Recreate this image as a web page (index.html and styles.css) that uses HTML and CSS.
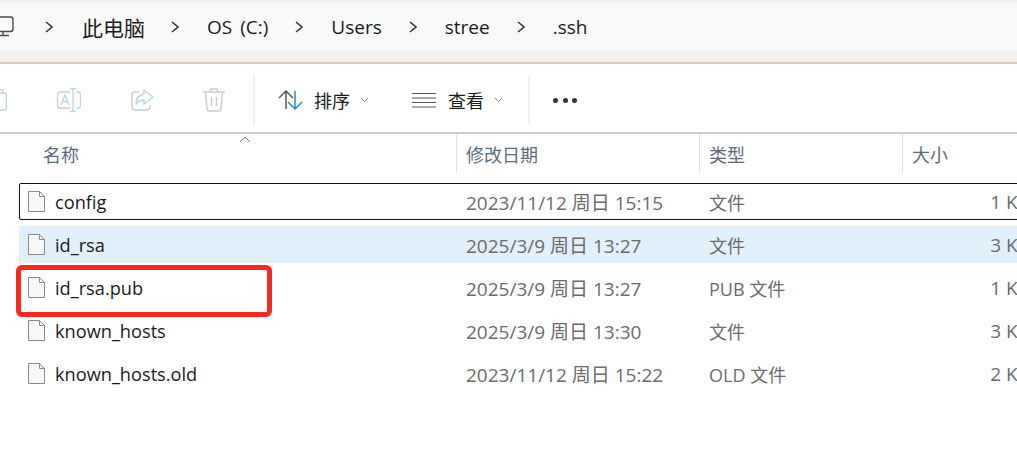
FILE: index.html
```html
<!DOCTYPE html>
<html lang="zh">
<head>
<meta charset="utf-8">
<title>.ssh</title>
<link rel="stylesheet" href="styles.css">
</head>
<body>
<div class="window">
  <nav class="crumbs">
    <svg class="pc" width="26" height="26" viewBox="0 0 26 26"><rect x="-6" y="3" width="19" height="14.500" rx="2.500" fill="none" stroke="#4a4a4a" stroke-width="1.400"/><path d="M-3 21.500H9M3 18v3" stroke="#4a4a4a" stroke-width="1.400" fill="none"/></svg>
    <svg class="chev" width="8" height="12" viewBox="0 0 8 12"><path d="M1 1l6 5-6 5" fill="none" stroke="#333" stroke-width="1.500"/></svg>
    <span class="crumb cjk">此电脑</span>
    <svg class="chev" width="8" height="12" viewBox="0 0 8 12"><path d="M1 1l6 5-6 5" fill="none" stroke="#333" stroke-width="1.500"/></svg>
    <span class="crumb spaced">OS (C:)</span>
    <svg class="chev" width="8" height="12" viewBox="0 0 8 12"><path d="M1 1l6 5-6 5" fill="none" stroke="#333" stroke-width="1.500"/></svg>
    <span class="crumb">Users</span>
    <svg class="chev" width="8" height="12" viewBox="0 0 8 12"><path d="M1 1l6 5-6 5" fill="none" stroke="#333" stroke-width="1.500"/></svg>
    <span class="crumb">stree</span>
    <svg class="chev" width="8" height="12" viewBox="0 0 8 12"><path d="M1 1l6 5-6 5" fill="none" stroke="#333" stroke-width="1.500"/></svg>
    <span class="crumb">.ssh</span>
  </nav>
  <div class="toolbar">
    <svg class="tool paste" width="24" height="26" viewBox="0 0 24 26"><rect x="11" y="6" width="12.500" height="17" rx="2.500" fill="none" stroke="#b5d4ec" stroke-width="1.400"/><path d="M14 7V3h6v4" fill="none" stroke="#cfcfcf" stroke-width="1.300"/></svg>
    <svg class="tool rename" width="24" height="24" viewBox="0 0 24 24"><path d="M13 4H3a2.500 2.500 0 0 0-2.500 2.500v11A2.500 2.500 0 0 0 3 20h10M19 4h2a2.500 2.500 0 0 1 2.500 2.500v11A2.500 2.500 0 0 1 21 20h-2" fill="none" stroke="#cdcdcd" stroke-width="1.400"/><path d="M13 .700h6M16 .700v22.600M13 23.300h6" fill="none" stroke="#b5d4ec" stroke-width="1.300"/><path d="M4 17l4-10 4 10M5.500 13.500h5" fill="none" stroke="#b5d4ec" stroke-width="1.300"/></svg>
    <svg class="tool share" width="24" height="24" viewBox="0 0 24 24"><path d="M9 4H5a3 3 0 0 0-3 3v12a3 3 0 0 0 3 3h12a3 3 0 0 0 3-3v-2" fill="none" stroke="#cdcdcd" stroke-width="1.400"/><path d="M14 2l9 7-9 7v-4c-4 0-6 1-8 4 0-6 3-9 8-10z" fill="none" stroke="#b5d4ec" stroke-width="1.400" stroke-linejoin="round"/></svg>
    <svg class="tool trash" width="24" height="26" viewBox="0 0 24 26"><path d="M1 5h22M8 5l1-3h6l1 3M3.500 5l1.500 17a2.500 2.500 0 0 0 2.500 2h9a2.500 2.500 0 0 0 2.500-2l1.500-17M9.500 10v9M14.500 10v9" fill="none" stroke="#cdcdcd" stroke-width="1.400"/></svg>
    <span class="sep"></span>
    <svg class="sort" width="25" height="22" viewBox="0 0 25 22"><path d="M8 20V2M1 9l7-7 7 7" fill="none" stroke="#555" stroke-width="1.500"/><path d="M17 2v18M10 13l7 7 7-7" fill="none" stroke="#2a86d0" stroke-width="1.500"/></svg>
    <span class="tlabel">排序</span>
    <svg class="down" width="9" height="6" viewBox="0 0 9 6"><path d="M1 1l3.500 3.500L8 1" fill="none" stroke="#888" stroke-width="1"/></svg>
    <svg class="lines" width="24" height="16" viewBox="0 0 24 16"><path d="M0 1.500h24M0 6h24M0 10.500h24M0 15h24" stroke="#555" stroke-width="1.200"/></svg>
    <span class="tlabel">查看</span>
    <svg class="down last" width="9" height="6" viewBox="0 0 9 6"><path d="M1 1l3.500 3.500L8 1" fill="none" stroke="#888" stroke-width="1"/></svg>
    <span class="sep"></span>
    <span class="dots"><i></i><i></i><i></i></span>
  </div>
  <div class="list">
    <svg class="sortmark" width="12" height="7" viewBox="0 0 12 7"><path d="M1 6l5-5 5 5" fill="none" stroke="#777" stroke-width="1"/></svg>
    <div class="head">
      <div class="hcell first">名称</div>
      <div class="hcell">修改日期</div>
      <div class="hcell">类型</div>
      <div class="hcell">大小</div>
    </div>
    <div class="row focus">
      <div class="name"><svg class="doc" width="17" height="21" viewBox="0 0 17 21"><path d="M.5.500h11l5 5v15H.500z" fill="#f8f8f8" stroke="#8a8a8a"/><path d="M11.500.500v5h5" fill="none" stroke="#8a8a8a"/></svg>config</div>
      <div class="date">2023/11/12 周日 15:15</div><div class="type">文件</div><div class="size">1 KB</div>
    </div>
    <div class="row selected">
      <div class="name"><svg class="doc" width="17" height="21" viewBox="0 0 17 21"><path d="M.5.500h11l5 5v15H.500z" fill="#f8f8f8" stroke="#8a8a8a"/><path d="M11.500.500v5h5" fill="none" stroke="#8a8a8a"/></svg>id_rsa</div>
      <div class="date">2025/3/9 周日 13:27</div><div class="type">文件</div><div class="size">3 KB</div>
    </div>
    <div class="row">
      <div class="name"><svg class="doc" width="17" height="21" viewBox="0 0 17 21"><path d="M.5.500h11l5 5v15H.500z" fill="#f8f8f8" stroke="#8a8a8a"/><path d="M11.500.500v5h5" fill="none" stroke="#8a8a8a"/></svg>id_rsa.pub</div>
      <div class="date">2025/3/9 周日 13:27</div><div class="type">PUB 文件</div><div class="size">1 KB</div>
      <div class="redbox"></div>
    </div>
    <div class="row">
      <div class="name"><svg class="doc" width="17" height="21" viewBox="0 0 17 21"><path d="M.5.500h11l5 5v15H.500z" fill="#f8f8f8" stroke="#8a8a8a"/><path d="M11.500.500v5h5" fill="none" stroke="#8a8a8a"/></svg>known_hosts</div>
      <div class="date">2025/3/9 周日 13:30</div><div class="type">文件</div><div class="size">3 KB</div>
    </div>
    <div class="row">
      <div class="name"><svg class="doc" width="17" height="21" viewBox="0 0 17 21"><path d="M.5.500h11l5 5v15H.500z" fill="#f8f8f8" stroke="#8a8a8a"/><path d="M11.500.500v5h5" fill="none" stroke="#8a8a8a"/></svg>known_hosts.old</div>
      <div class="date">2023/11/12 周日 15:22</div><div class="type">OLD 文件</div><div class="size">2 KB</div>
    </div>
  </div>
</div>
</body>
</html>
```
FILE: styles.css
```css
html, body {
  margin: 0;
  height: 100%;
  background: #fff;
  overflow: hidden;
}
body {
  font-family: "Open Sans", "Noto Sans CJK SC", sans-serif;
  color: #1b1b1b;
}
.window {
  width: 1017px;
  height: 463px;
  overflow: hidden;
}
.crumbs {
  display: flex;
  align-items: center;
  height: 48px;
  margin-top: 3px;
  background: #faf9f9;
  font-size: 19px;
  box-shadow: 0 -3px 0 #f3efec, 0 11px 0 #f3f0ee;
}
.pc {
  flex: none;
  margin-right: 19px;
}
.chev {
  flex: none;
  margin: 0 28px 0 27px;
}
.pc + .chev {
  margin: 0 29px 0 0;
}
.crumb {
  white-space: nowrap;
}
.crumb.cjk {
  font-size: 21px;
  margin-right: -1px;
}
.crumb.spaced {
  word-spacing: 3px;
}
.toolbar {
  display: flex;
  align-items: center;
  height: 70px;
  margin-top: 11px;
  padding-top: 4px;
  border-top: 2px solid #d3cdca;
  box-sizing: border-box;
}
.tool { flex: none; }
.paste { margin: 0 50px 0 -17px; }
.rename { margin-right: 49px; }
.share { margin-right: 48px; }
.trash { margin-right: 27px; }
.sep {
  flex: none;
  width: 2px;
  height: 48px;
  background: #f0f0f0;
  margin-right: 23px;
}
.sort { flex: none; margin-right: 11px; }
.tlabel {
  font-size: 18px;
  white-space: nowrap;
}
.down { flex: none; margin: 0 43px 0 10px; }
.down.last { margin-right: 25px; }
.lines { flex: none; margin-right: 12px; }
.dots {
  display: flex;
  gap: 4.500px;
}
.dots i {
  width: 5px;
  height: 5px;
  border-radius: 50%;
  background: #333;
}
.list {
  position: relative;
  border-top: 2px solid #d3cdca;
}
.sortmark {
  position: absolute;
  left: 239px;
  top: 2px;
}
.head {
  display: grid;
  grid-template-columns: 456px 243px 203px 200px;
  height: 39px;
  margin-bottom: 10px;
  color: #5c6b7a;
  font-size: 18px;
}
.hcell {
  display: flex;
  align-items: center;
  padding-left: 9px;
  border-left: 1px solid #e2e2e2;
  white-space: nowrap;
}
.hcell.first {
  border-left: 0;
  padding-left: 43px;
}
.row {
  position: relative;
  display: grid;
  grid-template-columns: 437px 243px 120px 211px;
  align-items: center;
  width: 1011px;
  height: 37px;
  margin: 0 0 6px 19px;
  color: #6b6b6b;
  font-size: 18px;
}
.row.focus {
  outline: 1px solid #111;
  outline-offset: -1px;
  border-radius: 2px;
}
.row.selected { background: #e2f0fb; }
.name {
  display: flex;
  align-items: center;
  gap: 10px;
  padding-left: 9px;
  color: #1b1b1b;
  font-size: 18.200px;
  white-space: nowrap;
}
.date {
  padding-left: 10px;
  font-size: 19px;
  white-space: nowrap;
}
.type {
  padding-left: 10px;
  white-space: nowrap;
}
.size {
  text-align: right;
  font-size: 19px;
  white-space: nowrap;
}
.doc { flex: none; }
.redbox {
  position: absolute;
  left: -3px;
  top: -4px;
  width: 256px;
  height: 52px;
  border: 5px solid #f5291f;
  border-radius: 6px;
  box-sizing: border-box;
  pointer-events: none;
}
```
